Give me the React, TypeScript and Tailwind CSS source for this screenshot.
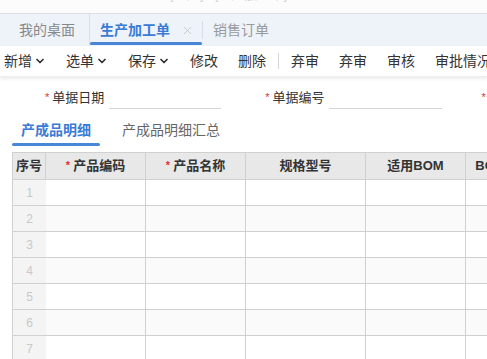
import { ChevronDown, X } from 'lucide-react';

const font = { fontFamily: '"Liberation Sans", "Noto Sans CJK SC", sans-serif' };

const tools = [
  { label: '新增', menu: true },
  { label: '选单', menu: true },
  { label: '保存', menu: true },
  { label: '修改' },
  { label: '删除' },
  { label: '|' },
  { label: '弃审' },
  { label: '弃审' },
  { label: '审核' },
  { label: '审批情况' },
];

const columns = [
  { label: '产品编码', width: 'w-[100px]', required: true },
  { label: '产品名称', width: 'w-[100px]', required: true },
  { label: '规格型号', width: 'w-[120px]' },
  { label: '适用BOM', width: 'w-[100px]' },
  { label: 'BOM版本', width: 'w-[76px]' },
];

const rows = [1, 2, 3, 4, 5, 6, 7];

function Star() {
  return <span className="text-[#d33] text-[11px] mr-[3px] relative -top-[1px]">*</span>;
}

export default function App() {
  return (
    <div className="w-[487px] h-[359px] overflow-hidden bg-white text-[#333]" style={font}>
      {/* window title strip, mostly scrolled off */}
      <div className="h-[14px] overflow-hidden bg-[#fcfcfc] border-b border-[#dadde2]">
        <div className="-mt-[13px] pl-[140px] text-[13px] text-[#d4d4d4] leading-[16px] whitespace-nowrap">
          ERP [生产] - [生产加工单]
        </div>
      </div>

      {/* tab bar */}
      <div className="h-[32px] bg-[#eef3fa] flex items-stretch text-[14px]">
        <div className="w-[89px] pl-[19px] flex items-center text-[#888]">我的桌面</div>
        <div className="relative w-[113px] border-l border-[#d8dee8] flex items-center pl-[10px] text-[#3a7bd5] font-semibold">
          生产加工单
          <X size={13} strokeWidth={1.5} className="ml-[11px] text-[#c0c4ca]" />
          <span className="absolute left-0 right-0 bottom-[1px] h-[3px] bg-[#4a86d8] rounded-sm" />
        </div>
        <div className="border-l border-[#d8dee8] my-[7px]" />
        <div className="pl-[10px] flex items-center text-[#999]">销售订单</div>
      </div>

      {/* toolbar */}
      <div className="h-[31px] flex items-center gap-5 pl-[4px] text-[14px] text-[#333] whitespace-nowrap shadow-[0_2px_3px_rgba(0,0,0,0.08)] border-b border-[#eee]">
        {tools.map((t, i) =>
          t.label === '|' ? (
            <span key={i} className="block shrink-0 -mx-2 w-px h-[16px] bg-[#d6d6d6]" />
          ) : (
            <span key={i} className="flex items-center">
              {t.label}
              {t.menu && <ChevronDown size={12} strokeWidth={3.5} className="ml-[2px]" />}
            </span>
          )
        )}
      </div>

      {/* form row */}
      <div className="h-[34px] mt-[4px] flex items-center text-[13px] whitespace-nowrap">
        <div className="flex items-center pl-[45px]">
          <Star />
          <span>单据日期</span>
          <span className="ml-[5px] w-[112px] h-[22px] border-b border-[#d4d4d4]" />
        </div>
        <div className="flex items-center pl-[44px]">
          <Star />
          <span>单据编号</span>
          <span className="ml-[4px] w-[113px] h-[22px] border-b border-[#d4d4d4]" />
        </div>
        <div className="pl-[40px]">
          <Star />
        </div>
      </div>

      {/* sub tabs */}
      <div className="h-[31px] flex items-stretch text-[14px] ml-[12px]">
        <div className="relative w-[88px] flex items-center justify-center text-[#3a7bd5] font-semibold">
          产成品明细
          <span className="absolute left-0 right-0 bottom-0 h-[3px] bg-[#4a86d8] rounded-sm" />
        </div>
        <div className="ml-[22px] flex items-center text-[#666]">产成品明细汇总</div>
      </div>

      {/* grid */}
      <div className="mt-[6px] ml-[12px] overflow-hidden">
        <div className="flex w-max text-[13px]">
          <div className="w-[34px] shrink-0">
            <div className="h-[28px] bg-[#e8e8e8] border border-[#d0d0d0] flex items-center justify-center font-bold">
              序号
            </div>
            {rows.map((r) => (
              <div
                key={r}
                className="h-[26px] bg-[#f4f4f4] border-l border-b border-[#d0d0d0] flex items-center justify-center text-[#c8c8c8] text-[12px]"
              >
                {r}
              </div>
            ))}
          </div>
          {columns.map((c) => (
            <div key={c.label} className={`${c.width} shrink-0`}>
              <div className="h-[28px] bg-[#e8e8e8] border-y border-r border-[#d0d0d0] flex items-center justify-center font-bold whitespace-nowrap">
                {c.required && <Star />}
                {c.label}
              </div>
              {rows.map((r) => (
                <div
                  key={r}
                  className={`h-[26px] border-r border-b border-[#d0d0d0] ${r % 2 === 0 ? 'bg-[#fafafa]' : 'bg-white'}`}
                />
              ))}
            </div>
          ))}
        </div>
      </div>
    </div>
  );
}
